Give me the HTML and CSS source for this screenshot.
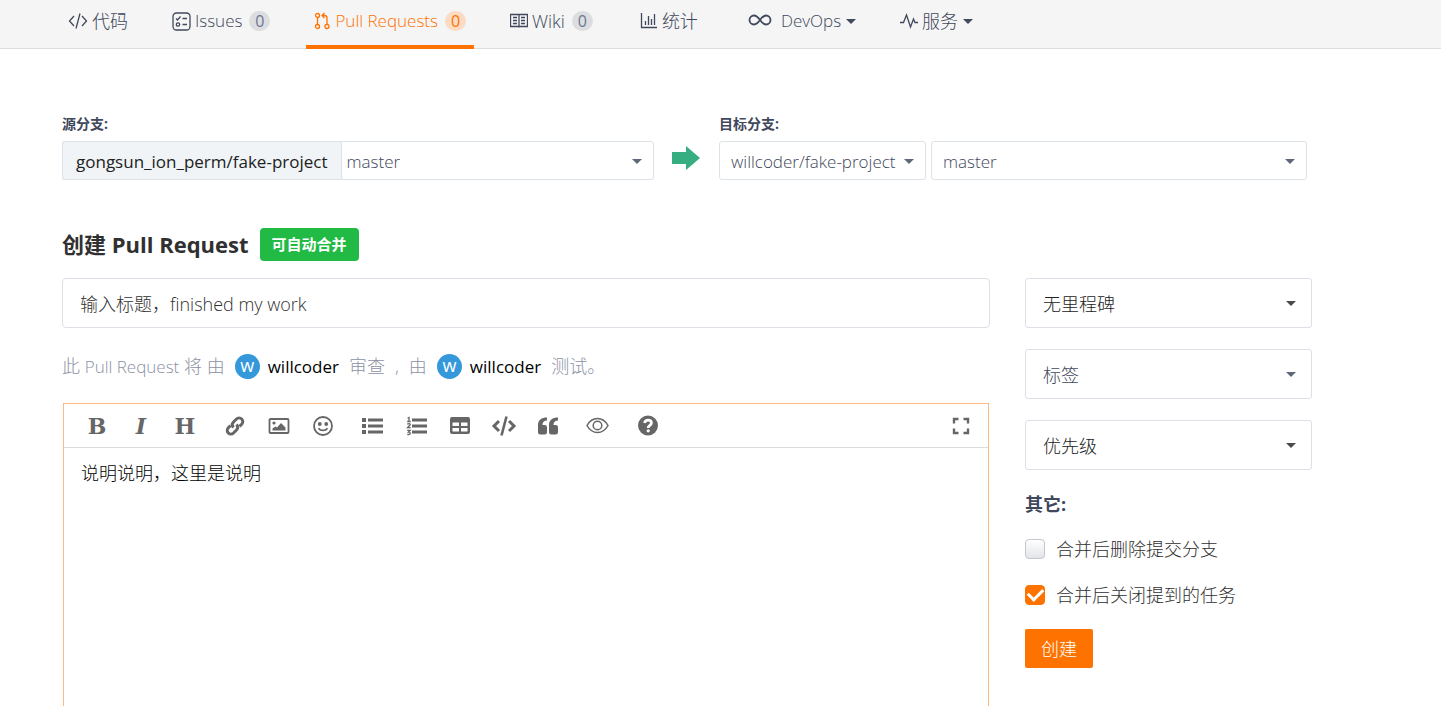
FILE: index.html
```html
<!DOCTYPE html>
<html lang="zh-CN">
<head>
<meta charset="utf-8">
<title>创建 Pull Request</title>
<link rel="stylesheet" href="styles.css">
</head>
<body>
<nav class="tabs">
  <a class="tab" href="#code"><svg class="icon" width="20" height="18" viewBox="0 0 20 18"><path d="M6 4 1.500 9 6 14M14 4l4.500 5-4.500 5M12 1.500 8 16.500"/></svg>代码</a>
  <a class="tab latin" href="#issues"><svg class="icon" width="19" height="19" viewBox="0 0 19 19"><rect x="1" y="1" width="17" height="17" rx="3.500"/><path d="M4 6.500 5.500 8 8.500 4.500M10.500 6.500H15M10.500 12.500H15"/><circle cx="6" cy="12.500" r="1.700"/></svg>Issues<span class="count">0</span></a>
  <a class="tab latin active" href="#pulls"><svg class="icon" width="17" height="18" viewBox="0 0 17 18"><circle cx="3.500" cy="3.500" r="2"/><circle cx="3.500" cy="14.500" r="2"/><circle cx="13" cy="14.500" r="2"/><path d="M3.500 5.500v7M13 12.500V6q0-2.500-2.500-2.500H8M10.500 1 8 3.500 10.500 6"/></svg>Pull Requests<span class="count">0</span></a>
  <a class="tab" href="#wiki"><svg class="icon" width="18" height="16" viewBox="0 0 18 16"><path d="M.5 1.500h17v12h-17zM9 1.500v13M3 4.500h4M3 7.500h4M3 10.500h4M11 4.500h4M11 7.500h4M11 10.500h4"/></svg>Wiki<span class="count">0</span></a>
  <a class="tab stats" href="#stats"><svg class="icon" width="18" height="18" viewBox="0 0 18 18"><path d="M1.500 1v14.500H17M5.500 13v-4M8.500 13V4M11.500 13V7M14.500 13V2"/></svg>统计</a>
  <a class="tab latin devops" href="#devops"><svg class="icon thick" width="24" height="18" viewBox="0 0 24 18"><path d="M12 8C9.500 4.500 8 3.500 6 3.500a4.500 4.500 0 0 0 0 9c2 0 3.500-1 6-4.500s4-4.500 6-4.500a4.500 4.500 0 0 1 0 9c-2 0-3.500-1-6-4.500z"/></svg>DevOps<i class="caret"></i></a>
  <a class="tab" href="#services"><svg class="icon" width="18" height="16" viewBox="0 0 18 16"><path d="M0 9.500h3.500L6.500 2l4 12 3-8 1.500 3.500h3"/></svg>服务<i class="caret"></i></a>
</nav>

<main class="page">
  <section class="branches">
    <div class="branch source">
      <label class="branch-label" for="source-branch">源分支:</label>
      <div class="control-row joined">
        <span class="repo">gongsun_ion_perm/fake-project</span>
        <span class="select-box grow"><select id="source-branch"><option>master</option></select></span>
      </div>
    </div>
    <svg class="arrow" width="28" height="24" viewBox="0 0 28 24"><path d="M0 6h14V0l14 12-14 12v-6H0z"/></svg>
    <div class="branch target">
      <label class="branch-label" for="target-branch">目标分支:</label>
      <div class="control-row">
        <span class="select-box repo-select"><select aria-label="目标仓库"><option>willcoder/fake-project</option></select></span>
        <span class="select-box grow"><select id="target-branch"><option>master</option></select></span>
      </div>
    </div>
  </section>

  <form class="request">
    <div class="content">
      <header class="heading"><h1>创建 Pull Request</h1><span class="merge-state">可自动合并</span></header>
      <input class="title-input" type="text" aria-label="标题" value="输入标题，finished my work">
      <p class="people"><span>此 <span class="latin">Pull Request</span> 将 由</span><span class="avatar">w</span><a href="#reviewer">willcoder</a><span>审查</span><span>,</span><span>由</span><span class="avatar">w</span><a href="#tester">willcoder</a><span>测试。</span></p>
      <div class="editor">
        <div class="toolbar">
          <button type="button" class="letter" aria-label="粗体">B</button>
          <button type="button" class="letter italic" aria-label="斜体">I</button>
          <button type="button" class="letter" aria-label="标题">H</button>
          <button type="button" class="group" aria-label="链接"><svg width="22" height="22" viewBox="0 0 22 22"><g class="line" stroke-width="3"><path d="M9.500 12.500c-2-2-1.500-4 0-5.500l3-3a3.600 3.600 0 0 1 5.200 5.200l-2.200 2.200"/><path d="M12.500 9.500c2 2 1.500 4 0 5.500l-3 3a3.600 3.600 0 0 1-5.200-5.200l2.200-2.200"/></g></svg></button>
          <button type="button" aria-label="图片"><svg width="22" height="22" viewBox="0 0 22 22"><rect class="line" x="1.500" y="4" width="19" height="14" rx="1"/><circle cx="6" cy="8" r="1.600"/><path d="M4.500 15.500v-2l3-2 1.500 1L13 8l4.500 4.500v3z"/></svg></button>
          <button type="button" aria-label="表情"><svg width="22" height="22" viewBox="0 0 22 22"><circle class="line" cx="11" cy="11" r="9"/><circle cx="7.800" cy="9" r="1.900"/><circle cx="14.200" cy="9" r="1.900"/><path class="line" d="M6.500 13.200c2 3 7 3 9 0"/></svg></button>
          <button type="button" class="group" aria-label="无序列表"><svg width="22" height="22" viewBox="0 0 22 22"><path d="M0 3h4v4H0zM0 9h4v4H0zM0 15h4v4H0zM6 3.500h15v3H6zM6 9.500h15v3H6zM6 15.500h15v3H6z"/></svg></button>
          <button type="button" aria-label="有序列表"><svg width="22" height="22" viewBox="0 0 22 22"><path d="M6 3.500h15v3H6zM6 9.500h15v3H6zM6 15.500h15v3H6z"/><path class="line" stroke-width="1.300" d="M1.500 3 3 2.500v4M1.200 6.500h3.500M1.200 9.200q3-1.200 3 .6L1.500 12.700h3.200M1.200 15.300h3L2.500 17q2 0 1.800 1.500-.6 1.500-3 .8"/></svg></button>
          <button type="button" aria-label="表格"><svg width="22" height="22" viewBox="0 0 22 22"><path fill-rule="evenodd" d="M2 2h16a2 2 0 0 1 2 2v13a2 2 0 0 1-2 2H2a2 2 0 0 1-2-2V4a2 2 0 0 1 2-2zM2.500 7.500V11H9V7.500zM11 7.500V11h6.500V7.500zM2.500 13v3.500H9V13zM11 13v3.500h6.500V13z"/></svg></button>
          <button type="button" aria-label="代码"><svg width="26" height="22" viewBox="0 0 26 22"><path class="line" stroke-width="3" d="M7 6 2 11l5 5M17 6l5 5-5 5"/><path class="line" stroke-width="2.600" d="M14.500 1.500l-5 19"/></svg></button>
          <button type="button" aria-label="引用"><svg width="22" height="22" viewBox="0 0 22 22"><path d="M9 2.500v3c-3 0-4.500 1.500-4.500 4.500h2.200A2.300 2.300 0 0 1 9 12.300v4.900a2.300 2.300 0 0 1-2.300 2.300H2.300A2.300 2.300 0 0 1 0 17.200V10c0-5 3.500-7.500 9-7.500z"/><path d="M20 2.500v3c-3 0-4.500 1.500-4.500 4.500h2.200a2.300 2.300 0 0 1 2.300 2.300v4.900a2.300 2.300 0 0 1-2.300 2.300h-4.400a2.300 2.300 0 0 1-2.300-2.300V10c0-5 3.500-7.500 9-7.500z"/></svg></button>
          <button type="button" class="group" aria-label="预览"><svg width="24" height="22" viewBox="0 0 24 22"><g class="line" stroke-width="1.500"><path d="M0 10.500C2.500 6 6 3.500 10.500 3.500s8 2.500 10.500 7c-2.500 4.500-6 7-10.500 7s-8-2.500-10.500-7z"/><circle cx="10.500" cy="10.500" r="4.300"/></g></svg></button>
          <button type="button" class="group" aria-label="帮助"><svg width="22" height="22" viewBox="0 0 22 22"><circle cx="10" cy="10.500" r="10"/><path class="line light" stroke-width="2.800" d="M6.500 8C7 6 8.200 5.200 10 5.200c2 0 3.400 1 3.400 2.800 0 2.300-3.200 2.300-3.200 5"/><circle class="dot" cx="10.200" cy="15.800" r="1.600"/></svg></button>
          <button type="button" class="fullscreen" aria-label="全屏"><svg width="18" height="18" viewBox="0 0 18 18"><path class="line" stroke-width="2.400" d="M2 6.500V2h4.500M11.500 2H16v4.500M16 11.500V16h-4.500M6.500 16H2v-4.500"/></svg></button>
        </div>
        <textarea class="description" aria-label="说明">说明说明，这里是说明</textarea>
      </div>
    </div>

    <aside class="options">
      <span class="select-box tall dark"><select aria-label="里程碑"><option>无里程碑</option></select></span>
      <span class="select-box tall"><select aria-label="标签"><option>标签</option></select></span>
      <span class="select-box tall dark"><select aria-label="优先级"><option>优先级</option></select></span>
      <h2>其它:</h2>
      <label class="check"><input type="checkbox"><span>合并后删除提交分支</span></label>
      <label class="check"><input type="checkbox" checked><span>合并后关闭提到的任务</span></label>
      <button class="submit" type="submit">创建</button>
    </aside>
  </form>
</main>
</body>
</html>
```

FILE: styles.css
```css
* { box-sizing: border-box; }

body {
  margin: 0;
  height: 100vh;
  display: flex;
  flex-direction: column;
  overflow: hidden;
  background: #fff;
  color: #40485b;
  font: 300 18px/24px "Open Sans", "Noto Sans CJK SC", sans-serif;
}

a { color: inherit; text-decoration: none; }
button, input, select, textarea { font: inherit; color: inherit; }
.latin { font-size: 17px; }

.tabs {
  flex: none;
  display: flex;
  gap: 28px;
  height: 49px;
  padding-left: 60px;
  background: #f5f5f5;
  border-bottom: 1px solid #dcddde;
}
.tab {
  display: flex;
  align-items: center;
  height: 49px;
  padding: 0 8px 3px;
  border-bottom: 4px solid transparent;
  white-space: nowrap;
}
.tab.active { color: #fe7300; border-color: #fe7300; }
.stats { margin-left: 3px; }
.devops { margin-left: 6px; }
.icon {
  flex: none;
  margin-right: 4px;
  fill: none;
  stroke: currentColor;
  stroke-width: 1.3;
}
.icon.thick { stroke-width: 1.8; margin-right: 9px; }
.count {
  width: 21px;
  height: 20px;
  margin-left: 7px;
  border-radius: 10px;
  background: #dcdde0;
  color: #6c7692;
  font-size: 16px;
  font-weight: 400;
  line-height: 20px;
  text-align: center;
}
.active .count { background: #fadbc3; color: #fe7300; }
.caret {
  margin-left: 5px;
  border: 5px solid transparent;
  border-top-color: currentColor;
  border-bottom: 0;
}

.page {
  flex: 1;
  min-height: 0;
  display: flex;
  flex-direction: column;
  padding: 64px 129px 0 62px;
}

.branches { display: flex; align-items: flex-end; padding-right: 5px; }
.source { flex: 592; }
.target { flex: 588; }
.branch-label {
  display: block;
  margin-bottom: 7px;
  font-size: 14px;
  font-weight: 700;
  line-height: 21px;
}
.control-row { display: flex; gap: 5px; height: 39px; }
.joined { gap: 0; }
.repo {
  padding: 0 13px;
  background: #f0f4f7;
  border: 1px solid #dce3e8;
  border-right: 0;
  border-radius: 3px 0 0 3px;
  color: #212121;
  font-size: 17px;
  font-weight: 400;
  line-height: 39px;
}
.arrow { flex: none; margin: 0 19px 10px 18px; fill: #36ae81; }

.select-box { position: relative; display: block; }
.select-box.grow { flex: 1; }
.select-box select {
  width: 100%;
  height: 100%;
  padding: 2px 20px 0 11px;
  appearance: none;
  background: #fff;
  border: 1px solid #dce3e8;
  border-radius: 3px;
  font-size: 17px;
}
.select-box::after {
  content: "";
  position: absolute;
  right: 12px;
  top: calc(50% - 2px);
  border: 5px solid transparent;
  border-top: 5px solid #5f687b;
  border-bottom: 0;
  pointer-events: none;
}
.joined .select-box select { padding-left: 5px; border-radius: 0 3px 3px 0; }
.repo-select { width: 207px; }

.request {
  flex: 1;
  min-height: 0;
  display: grid;
  grid-template-columns: minmax(0, 1fr) 287px;
  gap: 35px;
  margin-top: 48px;
}
.content { display: flex; flex-direction: column; min-height: 0; }
.heading { display: flex; align-items: center; gap: 11px; height: 33px; margin-bottom: 17px; }
h1 { margin: 0; color: #303030; font-size: 22px; font-weight: 700; line-height: 31px; }
.merge-state {
  padding: 0 12px;
  border-radius: 4px;
  background: #21ba45;
  color: #fff;
  font-size: 15px;
  font-weight: 700;
  line-height: 33px;
}
.title-input {
  width: 100%;
  height: 50px;
  padding: 0 17px;
  border: 1px solid #dcdfe6;
  border-radius: 4px;
  color: #303030;
}
.people {
  display: flex;
  align-items: center;
  gap: 10px;
  margin: 26px 0 24px;
  line-height: 25px;
  color: #8c92a4;
}
.people a { margin-left: -2px; color: #000; font-size: 17px; font-weight: 400; }
.avatar {
  width: 25px;
  height: 25px;
  border-radius: 50%;
  background: #3498db;
  color: #fff;
  font-weight: 400;
  line-height: 23px;
  text-align: center;
}

.editor {
  flex: 1;
  min-height: 0;
  display: flex;
  flex-direction: column;
  margin: 0 1px;
  border: 1px solid #fdb981;
  border-bottom: 0;
}
.toolbar {
  flex: none;
  display: flex;
  align-items: center;
  gap: 14px;
  height: 44px;
  padding: 0 18px;
  border-bottom: 1px solid #dcdcdc;
}
.toolbar button {
  display: flex;
  align-items: center;
  justify-content: center;
  width: 30px;
  height: 30px;
  padding: 0;
  background: none;
  border: 0;
  color: #666;
}
.toolbar .group { margin-left: 6px; }
.toolbar .fullscreen { margin-left: auto; margin-right: -6px; }
.toolbar .letter { font: 700 22px/30px "DejaVu Serif", serif; }
.toolbar .italic { font-style: italic; }
.toolbar svg { overflow: visible; fill: #666; stroke-width: 1.8; }
.toolbar .line { fill: none; stroke: #666; }
.toolbar .light { stroke: #fff; }
.toolbar .dot { fill: #fff; }
.description {
  flex: 1;
  min-height: 0;
  padding: 13px 17px;
  border: 0;
  outline: 0;
  resize: none;
  color: #000;
}

.options { padding-top: 50px; }
.select-box.tall { height: 50px; margin-bottom: 21px; }
.tall select { padding: 1px 24px 0 17px; border-color: #dcdfe6; font-size: 18px; }
.tall::after { right: 16px; }
.dark { color: #212121; }
.dark::after { border-top-color: #4a4a4a; }
h2 { margin: 0 0 20px; font-size: 18px; font-weight: 700; line-height: 26px; }
.check {
  display: flex;
  align-items: center;
  gap: 11px;
  height: 24px;
  margin-bottom: 22px;
  color: #303030;
}
.check input {
  width: 20px;
  height: 20px;
  margin: 0;
  appearance: none;
  border: 1px solid #c4c6cc;
  border-radius: 4px;
  background: linear-gradient(#fff, #e2e4ea);
}
.check input:checked { display: grid; place-items: center; border-color: #fe7300; background: #fe7300; }
.check input:checked::before {
  content: "";
  width: 12px;
  height: 7px;
  margin-bottom: 4px;
  border: solid #fff;
  border-width: 0 0 3px 3px;
  transform: rotate(-45deg);
}
.submit {
  width: 68px;
  height: 39px;
  padding: 0;
  border: 0;
  border-radius: 2px;
  background: #fe7300;
  color: #fff;
}
```
